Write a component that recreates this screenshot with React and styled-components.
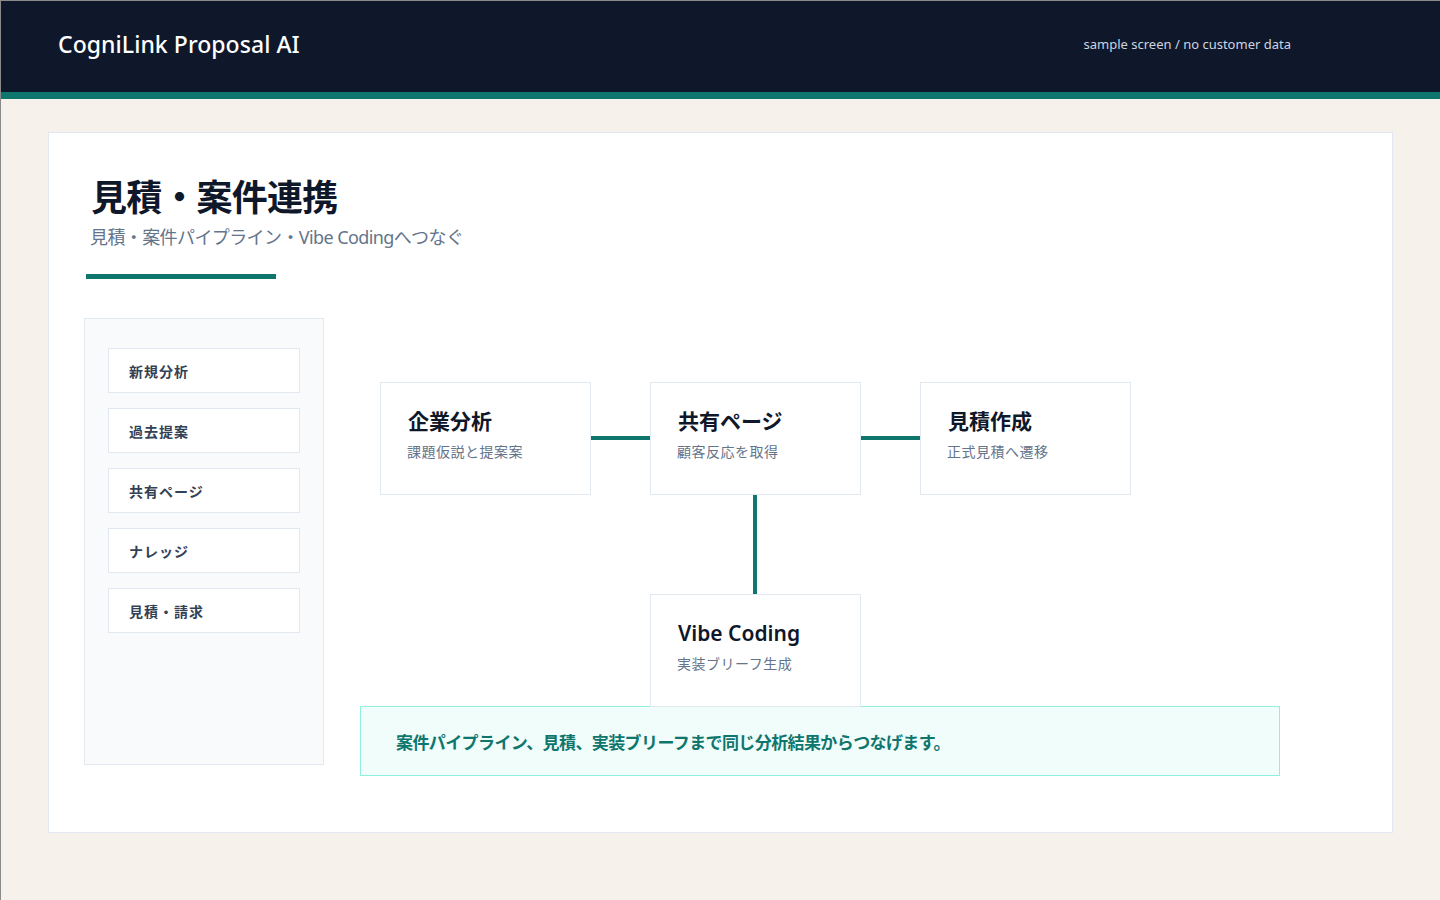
import React from "react";
import styled, { createGlobalStyle } from "styled-components";

const Global = createGlobalStyle`
  html, body { margin: 0; padding: 0; }
  body {
    background: #f6f1ea;
    font-family: "Noto Sans", "Noto Sans CJK JP", sans-serif;
    color: #0f172a;
  }
  * { box-sizing: border-box; }
`;

const Page = styled.div`
  min-height: 900px;
  border-top: 1px solid #8a8a8a;
  border-left: 1px solid #8a8a8a;
`;

const Header = styled.header`
  height: 98px;
  background: #0f172a;
  border-bottom: 7px solid #0f766e;
  display: flex;
  align-items: center;
  justify-content: space-between;
  padding: 0 148px 6px 57px;
`;

const Brand = styled.div`
  color: #ffffff;
  font-size: 23px;
  font-weight: 500;
  letter-spacing: 0.05px;
`;

const Note = styled.div`
  color: #cbd5e1;
  font-size: 13px;
  margin-right: 1px;
`;

const Main = styled.main`
  padding: 33px 47px 0 47px;
`;

const Card = styled.section`
  background: #ffffff;
  border: 1px solid #e2e8f0;
  padding: 38px 35px 56px 35px;
`;

const TitleBlock = styled.div`
  padding-left: 2px;
`;

const Title = styled.h1`
  margin: 0 0 0 5px;
  font-family: "Noto Sans CJK JP", sans-serif;
  font-size: 36px;
  font-weight: 700;
  line-height: 48px;
  letter-spacing: -0.8px;
  color: #0f172a;
`;

const Subtitle = styled.p`
  margin: 5px 0 0 4px;
  font-family: "Noto Sans", "Noto Sans CJK JP", sans-serif;
  font-size: 18px;
  line-height: 26px;
  letter-spacing: -0.6px;
  color: #64748b;
`;

const Accent = styled.div`
  width: 190px;
  height: 5px;
  background: #0f766e;
  margin: 24px 0 0 2px;
`;

const Body = styled.div`
  margin-top: 39px;
  display: grid;
  grid-template-columns: 240px 920px;
  column-gap: 36px;
  align-items: start;
`;

const Sidebar = styled.nav`
  height: 447px;
  background: #f8fafc;
  border: 1px solid #e2e8f0;
  padding: 29px 23px;
  display: flex;
  flex-direction: column;
  gap: 15px;
`;

const NavItem = styled.div`
  height: 45px;
  background: #ffffff;
  border: 1px solid #e2e8f0;
  display: flex;
  align-items: center;
  padding-left: 20px;
  font-family: "Noto Sans CJK JP", sans-serif;
  font-size: 14px;
  font-weight: 700;
  letter-spacing: 1px;
  color: #334155;
`;

const Flow = styled.div`
  display: flex;
  flex-direction: column;
`;

const Canvas = styled.div`
  position: relative;
  height: 388px;
`;

const Node = styled.div`
  position: absolute;
  left: ${(p) => p.$x}px;
  top: ${(p) => p.$y}px;
  width: 211px;
  height: 113px;
  background: #ffffff;
  border: 1px solid #e2e8f0;
  padding: 24px 20px 0 26px;
`;

const NodeTitle = styled.div`
  font-family: "Noto Sans", "Noto Sans CJK JP", sans-serif;
  font-size: 21px;
  font-weight: 600;
  line-height: 28px;
  color: #0f172a;
  padding-left: 1px;
`;

const NodeSub = styled.div`
  margin-top: 6px;
  font-family: "Noto Sans CJK JP", sans-serif;
  font-size: 14px;
  line-height: 20px;
  letter-spacing: 0.5px;
  color: #64748b;
`;

const Link = styled.div`
  position: absolute;
  left: ${(p) => p.$x}px;
  top: ${(p) => p.$y}px;
  width: ${(p) => p.$w}px;
  height: ${(p) => p.$h}px;
  background: #0f766e;
`;

const Notice = styled.div`
  height: 70px;
  background: #f0fdfa;
  border: 1px solid #8ff0db;
  display: flex;
  align-items: center;
  padding-left: 35px;
  font-family: "Noto Sans CJK JP", sans-serif;
  font-size: 17px;
  font-weight: 700;
  letter-spacing: -0.6px;
  color: #0f766e;
`;

const navItems = ["新規分析", "過去提案", "共有ページ", "ナレッジ", "見積・請求"];

const nodes = [
  { x: 20, y: 64, title: "企業分析", sub: "課題仮説と提案案" },
  { x: 290, y: 64, title: "共有ページ", sub: "顧客反応を取得" },
  { x: 560, y: 64, title: "見積作成", sub: "正式見積へ遷移" },
  { x: 290, y: 276, title: "Vibe Coding", sub: "実装ブリーフ生成" },
];

const links = [
  { x: 231, y: 118, w: 59, h: 4 },
  { x: 501, y: 118, w: 59, h: 4 },
  { x: 393, y: 177, w: 4, h: 99 },
];

export default function App() {
  return (
    <Page>
      <Global />
      <Header>
        <Brand>CogniLink Proposal AI</Brand>
        <Note>sample screen / no customer data</Note>
      </Header>
      <Main>
        <Card>
          <TitleBlock>
            <Title>見積・案件連携</Title>
            <Subtitle>見積・案件パイプライン・Vibe Codingへつなぐ</Subtitle>
          </TitleBlock>
          <Accent />
          <Body>
            <Sidebar>
              {navItems.map((n) => (
                <NavItem key={n}>{n}</NavItem>
              ))}
            </Sidebar>
            <Flow>
              <Canvas>
                {links.map((l, i) => (
                  <Link key={i} $x={l.x} $y={l.y} $w={l.w} $h={l.h} />
                ))}
                {nodes.map((n) => (
                  <Node key={n.title} $x={n.x} $y={n.y}>
                    <NodeTitle>{n.title}</NodeTitle>
                    <NodeSub>{n.sub}</NodeSub>
                  </Node>
                ))}
              </Canvas>
              <Notice>案件パイプライン、見積、実装ブリーフまで同じ分析結果からつなげます。</Notice>
            </Flow>
          </Body>
        </Card>
      </Main>
    </Page>
  );
}
